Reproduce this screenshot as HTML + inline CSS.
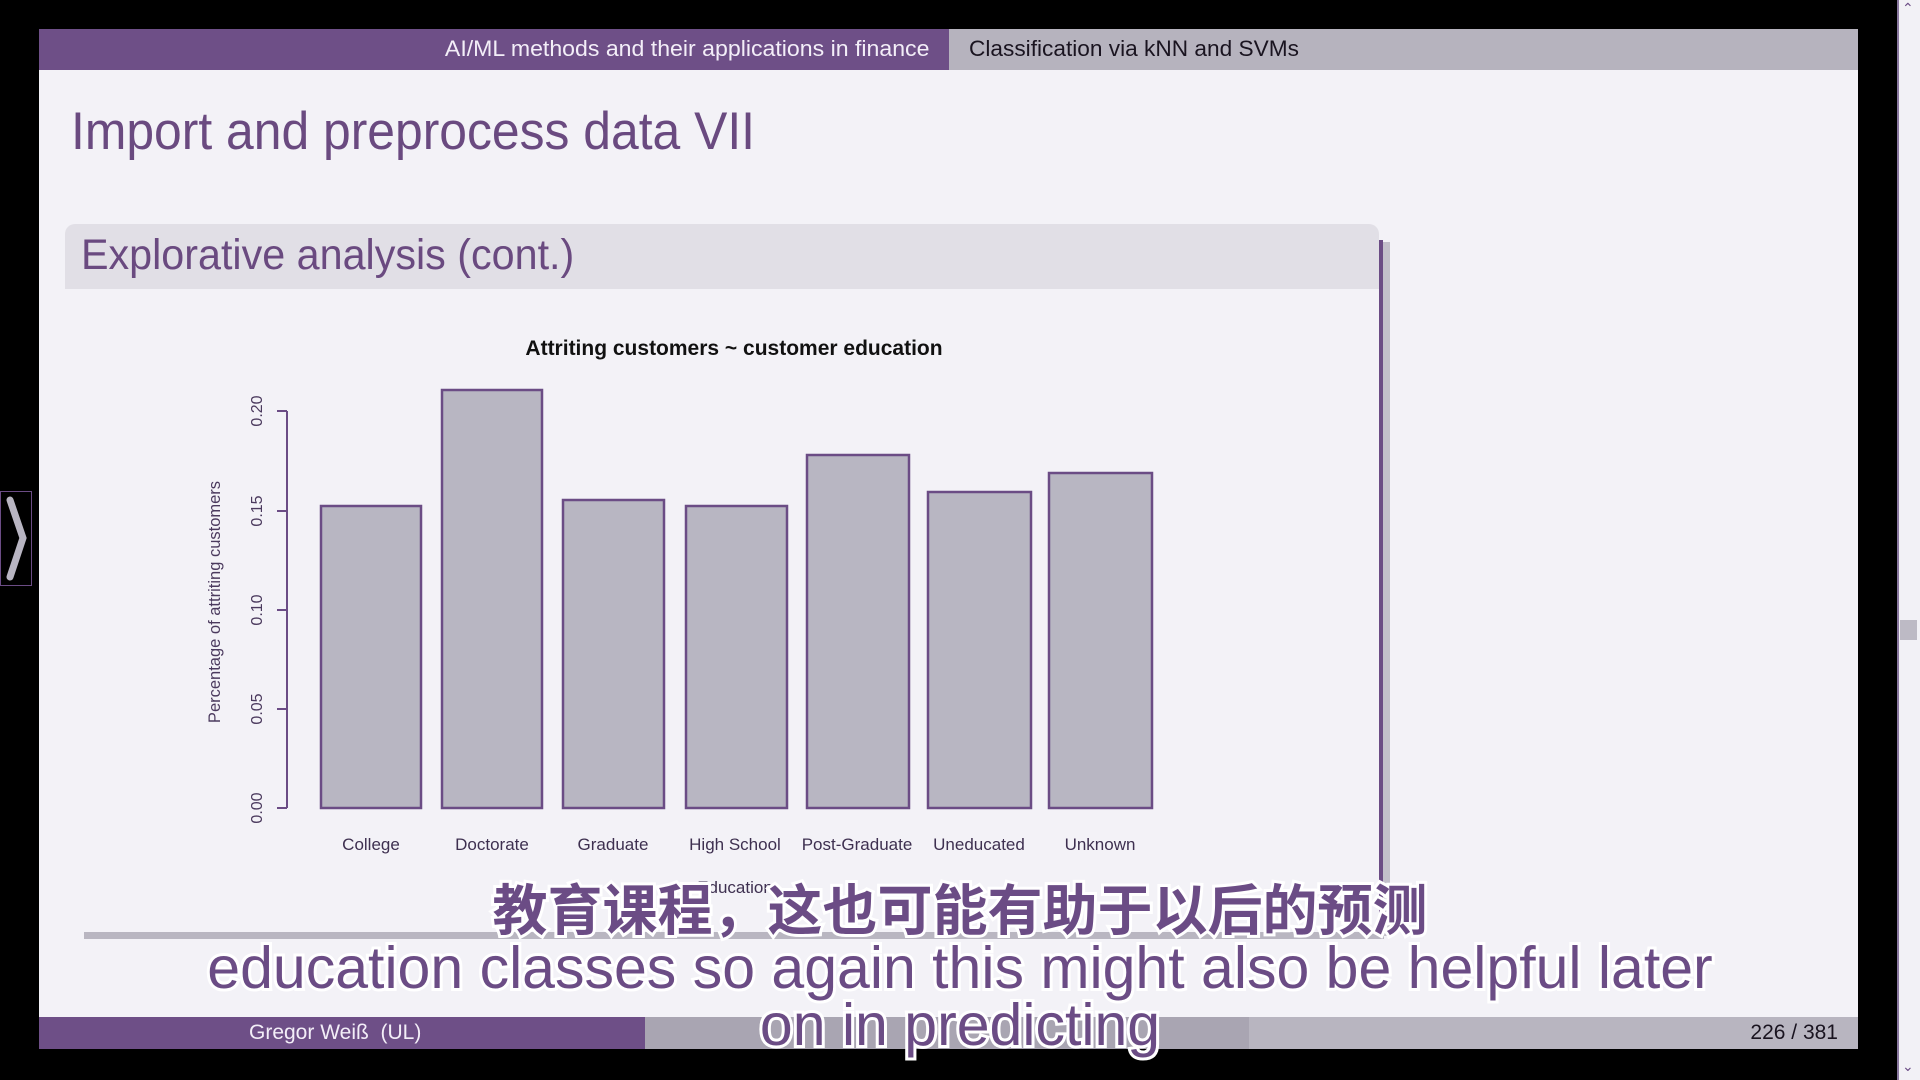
<!DOCTYPE html>
<html><head><meta charset="utf-8"><style>
*{margin:0;padding:0;box-sizing:border-box}
body{width:1920px;height:1080px;background:#000;position:relative;overflow:hidden;font-family:"Liberation Sans",sans-serif}
.a{position:absolute}
.slide{left:39px;top:29px;width:1819px;height:1020px;background:#f3f2f7}
.t{white-space:nowrap}
.sub{position:absolute;left:0;width:1920px;text-align:center;color:#6b4c85;font-family:"Liberation Sans","Noto Sans CJK SC",sans-serif;-webkit-text-stroke:6px #fff;paint-order:stroke fill;white-space:nowrap}
</style></head><body>
<div class="a slide"></div>
<!-- header -->
<div class="a" style="left:39px;top:29px;width:910px;height:41px;background:#6e4f87"></div>
<div class="a" style="left:949px;top:29px;width:909px;height:41px;background:#b6b3be"></div>
<div class="a t" style="right:991px;top:34px;font-size:22px;color:#f3eef8;line-height:30px;transform:scaleX(1.05);transform-origin:right">AI/ML methods and their applications in finance</div>
<div class="a t" style="left:969px;top:34px;font-size:22px;color:#1a1420;line-height:30px;transform:scaleX(1.03);transform-origin:left">Classification via kNN and SVMs</div>
<!-- title -->
<div class="a t" style="left:71px;top:100px;font-size:53px;color:#6a4a80;line-height:64px;transform:scaleX(0.94);transform-origin:left">Import and preprocess data VII</div>
<!-- block -->
<div class="a" style="left:65px;top:224px;width:1314px;height:65px;background:#e1dfe6;border-radius:10px 10px 0 0"></div>
<div class="a t" style="left:81px;top:227px;font-size:43px;color:#6a4a80;line-height:56px;transform:scaleX(0.96);transform-origin:left">Explorative analysis (cont.)</div>
<div class="a" style="left:1379px;top:240px;width:4px;height:696px;background:#6b4c85"></div>
<div class="a" style="left:1383px;top:242px;width:7px;height:694px;background:#c2bfca"></div>
<div class="a" style="left:84px;top:932px;width:1300px;height:7px;background:#b9b6c1"></div>
<!-- chart -->
<svg class="a" style="left:0;top:0" width="1920" height="1080">
<g font-family="Liberation Sans,sans-serif" fill="#4b3a5e">
<text x="734" y="355" text-anchor="middle" font-size="21" font-weight="bold" fill="#111">Attriting customers ~ customer education</text>
<g stroke="#6b4c85" stroke-width="2" fill="none">
<path d="M287 411V808M277 411H287M277 511H287M277 610H287M277 709H287M277 808H287"/>
</g>
<g font-size="16" fill="#4b3a5e">
<text transform="translate(262,808) rotate(-90)" text-anchor="middle">0.00</text>
<text transform="translate(262,709) rotate(-90)" text-anchor="middle">0.05</text>
<text transform="translate(262,610) rotate(-90)" text-anchor="middle">0.10</text>
<text transform="translate(262,511) rotate(-90)" text-anchor="middle">0.15</text>
<text transform="translate(262,411) rotate(-90)" text-anchor="middle">0.20</text>
<text transform="translate(220,602) rotate(-90)" text-anchor="middle" font-size="16.5">Percentage of attriting customers</text>
</g>
<g fill="#b8b6c2" stroke="#6b4c85" stroke-width="2.5">
<rect x="321" y="506" width="100" height="302"/>
<rect x="442" y="390" width="100" height="418"/>
<rect x="563" y="500" width="101" height="308"/>
<rect x="686" y="506" width="101" height="302"/>
<rect x="807" y="455" width="102" height="353"/>
<rect x="928" y="492" width="103" height="316"/>
<rect x="1049" y="473" width="103" height="335"/>
</g>
<g font-size="17" text-anchor="middle" fill="#3e3050">
<text x="371" y="850">College</text>
<text x="492" y="850">Doctorate</text>
<text x="613" y="850">Graduate</text>
<text x="735" y="850">High School</text>
<text x="857" y="850">Post-Graduate</text>
<text x="979" y="850">Uneducated</text>
<text x="1100" y="850">Unknown</text>
<text x="735" y="893">Education</text>
</g>
</g>
</svg>
<!-- footer -->
<div class="a" style="left:39px;top:1017px;width:606px;height:32px;background:#6e4f87"></div>
<div class="a" style="left:645px;top:1017px;width:604px;height:32px;background:#a9a5b2"></div>
<div class="a" style="left:1249px;top:1017px;width:609px;height:32px;background:#b8b5c0"></div>
<div class="a t" style="left:249px;top:1019px;font-size:21px;color:#f3eef8;line-height:28px">Gregor Weiß&nbsp;&nbsp;(UL)</div>
<div class="a t" style="right:82px;top:1019px;font-size:21px;color:#1a1420;line-height:28px">226 / 381</div>
<!-- scrollbar -->
<div class="a" style="left:1897px;top:0;width:23px;height:1080px;background:#f2f1f6;border-left:2px solid #8a78a0"></div>
<div class="a" style="left:1900px;top:620px;width:17px;height:20px;background:#bdbac5"></div>
<div class="a t" style="left:1902px;top:0;font-size:14px;color:#6b4c85">&#8963;</div>
<div class="a t" style="left:1902px;top:1058px;font-size:14px;color:#6b4c85">&#8964;</div>
<!-- left tab -->
<svg class="a" style="left:0;top:491px" width="32" height="96"><rect x="0.5" y="0.5" width="31" height="94" fill="#000" stroke="#6b4c85"/><path d="M10 9L23 47L10 86" stroke="#b8b5c2" stroke-width="7" fill="none" stroke-linecap="round"/></svg>
<!-- subtitles -->
<div class="sub" style="top:879px;font-size:55px;line-height:64px;left:0;font-weight:bold">教育课程，这也可能有助于以后的预测</div>
<div class="sub" style="top:935px;font-size:59px;line-height:66px">education classes so again this might also be helpful later</div>
<div class="sub" style="top:992px;font-size:59px;line-height:66px">on in predicting</div>
</body></html>
